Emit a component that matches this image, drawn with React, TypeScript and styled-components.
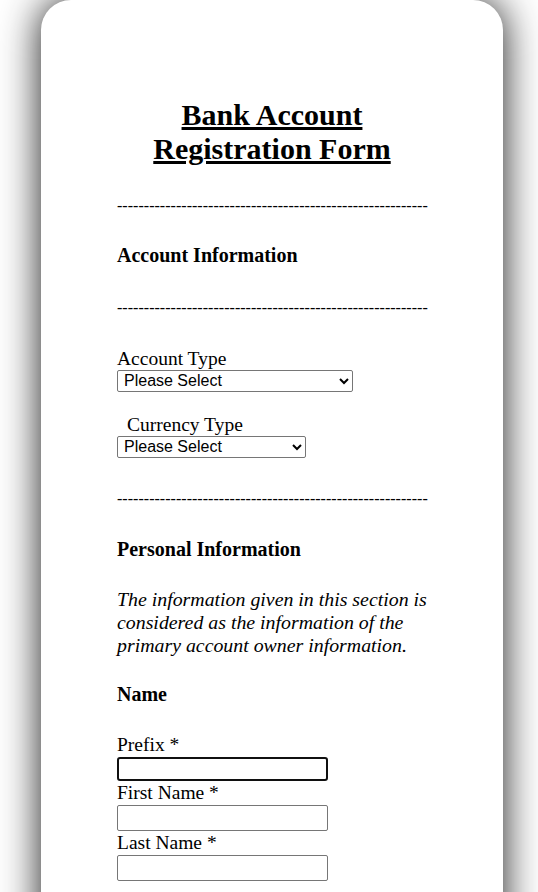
import React from 'react';
import styled, { createGlobalStyle } from 'styled-components';

const GlobalStyle = createGlobalStyle`
  html, body {
    margin: 0;
    padding: 0;
    background: #fff;
  }
  body {
    font-family: 'Liberation Serif', 'Times New Roman', serif;
    color: #000;
    overflow: hidden;
  }
`;

const DASHES = '-'.repeat(58);

export default function App() {
  return (
    <Page>
      <GlobalStyle />
      <Card>
        <Title>Bank Account Registration Form</Title>

        <Divider $top={31}>{DASHES}</Divider>
        <SectionTitle $top={29}>Account Information</SectionTitle>
        <Divider $top={32}>{DASHES}</Divider>

        <Field $top={30}>
          <Label>Account Type</Label>
          <Select $width={236} defaultValue="">
            <option value="">Please Select</option>
            <option>Savings</option>
            <option>Checking</option>
          </Select>
        </Field>
        <Field $top={22}>
          <Label $indent={10}>Currency Type</Label>
          <Select $width={189} defaultValue="">
            <option value="">Please Select</option>
            <option>USD</option>
            <option>EUR</option>
          </Select>
        </Field>

        <Divider $top={32}>{DASHES}</Divider>
        <SectionTitle $top={30}>Personal Information</SectionTitle>
        <Note>
          The information given in this section is considered as the information of the primary
          account owner information.
        </Note>
        <SectionTitle $top={26}>Name</SectionTitle>

        <Field $top={27}>
          <Label $tall>Prefix *</Label>
          <TextInput $focused />
        </Field>
        <Field>
          <Label $tall>First Name *</Label>
          <TextInput />
        </Field>
        <Field>
          <Label $tall>Last Name *</Label>
          <TextInput />
        </Field>
      </Card>
    </Page>
  );
}

const Page = styled.div`
  padding: 0 35px 0 41px;
  min-height: 892px;
`;

const Card = styled.div`
  background: #fff;
  border-radius: 30px 30px 0 0;
  box-shadow: 0 0 40px rgba(0, 0, 0, 0.9);
  padding: 98px 76px 120px;
  display: flex;
  flex-direction: column;
  align-items: flex-start;
`;

const Title = styled.h1`
  align-self: stretch;
  margin: 0;
  font-size: 30px;
  font-weight: bold;
  line-height: 34px;
  text-align: center;
  text-decoration: underline;
  padding: 0 4px;
`;

const Divider = styled.p<{ $top: number }>`
  margin: ${p => p.$top}px 0 0;
  font-size: 16px;
  line-height: 18.4px;
  letter-spacing: 0.03px;
  white-space: nowrap;
`;

const SectionTitle = styled.h4<{ $top: number }>`
  margin: ${p => p.$top}px 0 0;
  font-size: 20px;
  line-height: 23px;
  font-weight: bold;
`;

const Note = styled.p`
  margin: 27px 0 0;
  font-size: 19.85px;
  line-height: 23px;
  font-style: italic;
`;

const Field = styled.div<{ $top?: number }>`
  display: flex;
  flex-direction: column;
  align-items: flex-start;
  margin-top: ${p => p.$top ?? 0}px;
`;

const Label = styled.label<{ $indent?: number; $tall?: boolean }>`
  font-size: 19.5px;
  line-height: ${p => (p.$tall ? 24 : 22)}px;
  padding-left: ${p => p.$indent ?? 0}px;
`;

const Select = styled.select<{ $width: number }>`
  width: ${p => p.$width}px;
  height: 22px;
  margin: 0;
  padding: 0 2px;
  font-family: 'Liberation Sans', Arial, sans-serif;
  font-size: 16px;
  color: #000;
  background: #fff;
  border: 1px solid #767676;
  border-radius: 2px;
`;

const TextInput = styled.input<{ $focused?: boolean }>`
  box-sizing: border-box;
  width: 211px;
  height: ${p => (p.$focused ? 24 : 26)}px;
  margin: 0;
  padding: 1px 2px;
  font-size: 16px;
  background: #fff;
  border: ${p => (p.$focused ? '2px solid #101010' : '1px solid #767676')};
  border-radius: ${p => (p.$focused ? 3 : 2)}px;
  outline: none;
`;
